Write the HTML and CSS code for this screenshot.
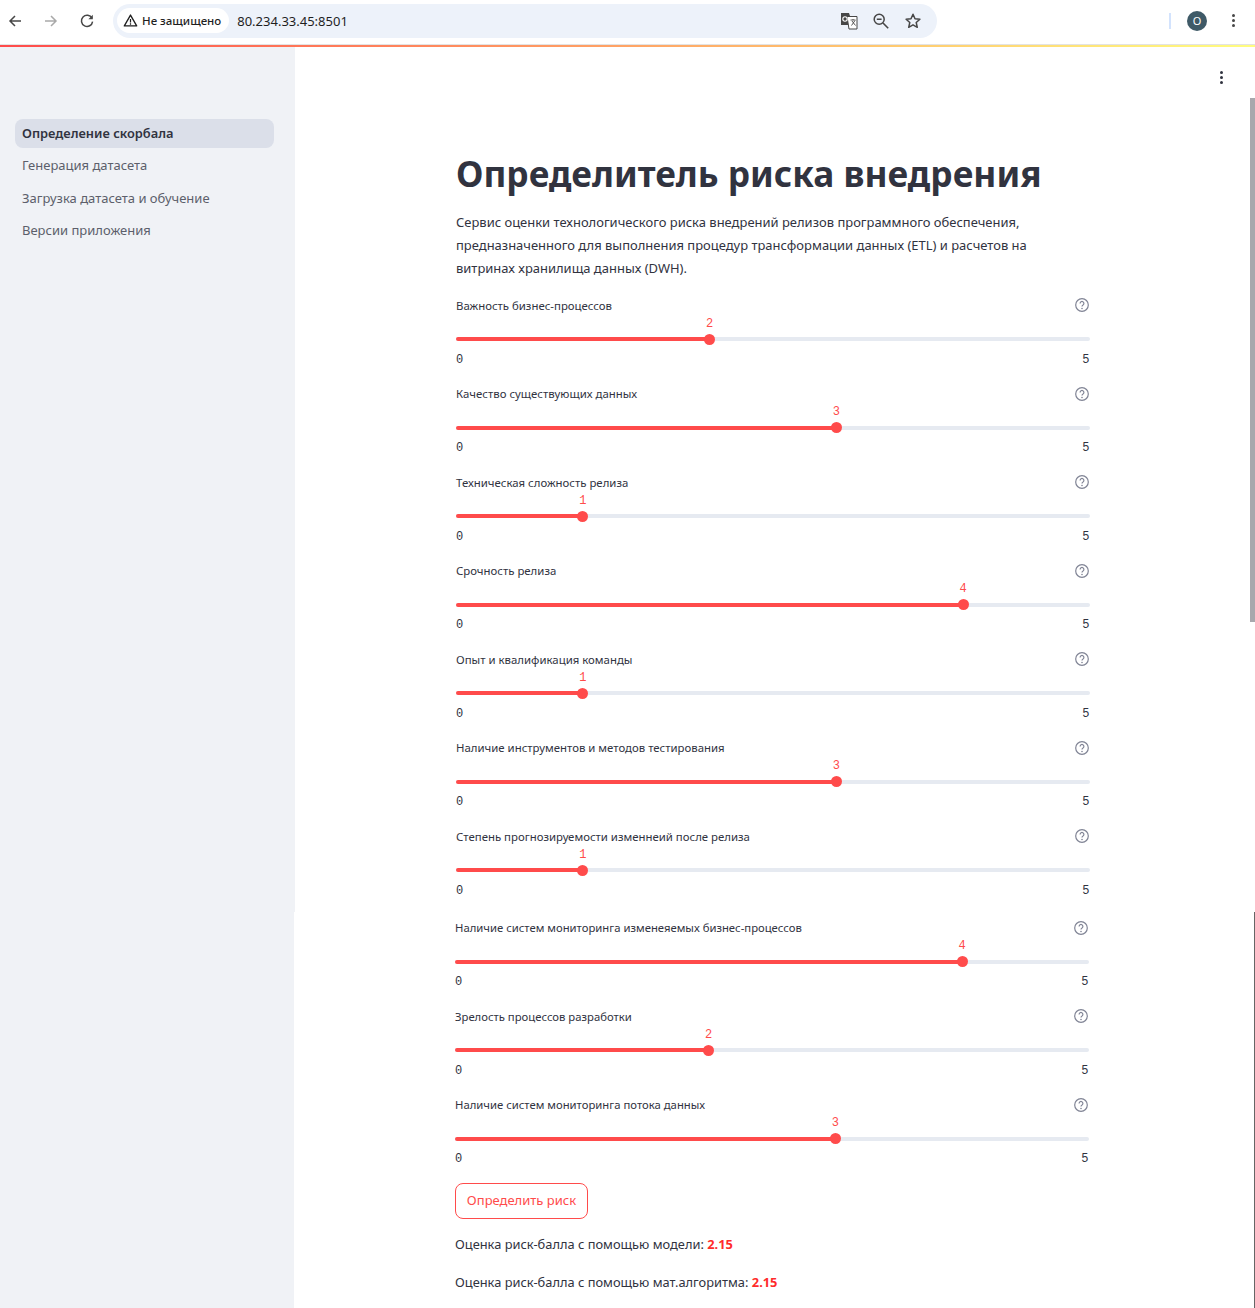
FILE: index.html
```html
<!DOCTYPE html>
<html lang="ru">
<head>
    <meta charset="UTF-8">
    <title>Определитель риска внедрения</title>
    <link rel="stylesheet" href="styles.css">
</head>
<body>

    <header class="browser-bar">
        <svg class="nav-icon" viewBox="0 0 16 16"><path d="M14 8H3M8 3L3 8l5 5" fill="none" stroke="#474747" stroke-width="1.5"/></svg>
        <svg class="nav-icon" viewBox="0 0 16 16"><path d="M2 8h11M8 3l5 5-5 5" fill="none" stroke="#a9a9a9" stroke-width="1.5"/></svg>
        <svg class="nav-icon" viewBox="0 0 16 16"><path d="M13 5.2A5.6 5.6 0 1 0 13.6 8.6" fill="none" stroke="#474747" stroke-width="1.5"/><path d="M13.8 1.8v4.4H9.4z" fill="#474747"/></svg>

        <div class="omnibox">
            <div class="security-chip">
                <svg class="warn-icon" viewBox="0 0 16 16"><path d="M8 2.2L14.6 13.8H1.4z" fill="none" stroke="#1f1f1f" stroke-width="1.4" stroke-linejoin="round"/><path d="M8 6.4v3.8M8 11v1.4" stroke="#1f1f1f" stroke-width="1.3"/></svg>
                <span>Не защищено</span>
            </div>
            <span class="url">80.234.33.45:8501</span>
            <div class="omnibox-icons">
                <svg class="omni-icon" viewBox="0 0 18 18"><path d="M1 1h8l1 3h-1v9H1z" fill="#474747"/><path d="M7 4.5h10v12.5H9z" fill="#fff" stroke="#474747" stroke-width="1"/><circle cx="5" cy="7" r="2.2" fill="none" stroke="#fff" stroke-width="1.1"/><path d="M10.5 8h5M13 7v1M11.5 13.5l3.5-5M12 9l3.5 4.5" fill="none" stroke="#474747" stroke-width="0.9"/></svg>
                <svg class="omni-icon" viewBox="0 0 18 18"><circle cx="7.2" cy="7.2" r="5" fill="none" stroke="#474747" stroke-width="1.5"/><path d="M4.8 7.2h4.8M11 11l5.2 5.2" stroke="#474747" stroke-width="1.6"/></svg>
                <svg class="omni-icon" viewBox="0 0 18 18"><path d="M9 2.2l2 4.5 4.9.5-3.7 3.3 1.1 4.8L9 12.8l-4.3 2.5 1.1-4.8L2.1 7.2 7 6.7z" fill="none" stroke="#474747" stroke-width="1.5" stroke-linejoin="round"/></svg>
            </div>
        </div>

        <div class="bar-divider"></div>
        <div class="avatar">O</div>
        <div class="kebab kebab-chrome"><i></i><i></i><i></i></div>
    </header>
    <div class="decoration"></div>

    <div class="app">
        <div class="part part-top">
            <aside class="sidebar">
                <nav class="side-nav">
                    <a class="nav-item active">Определение скорбала</a>
                    <a class="nav-item">Генерация датасета</a>
                    <a class="nav-item">Загрузка датасета и обучение</a>
                    <a class="nav-item">Версии приложения</a>
                </nav>
            </aside>
            <main class="main">
                <div class="toolbar"><div class="kebab"><i></i><i></i><i></i></div></div>
                <div class="content">
                    <h1>Определитель риска внедрения</h1>
                    <p class="intro">Сервис оценки технологического риска внедрений релизов программного обеспечения, предназначенного для выполнения процедур трансформации данных (ETL) и расчетов на витринах хранилища данных (DWH).</p>
                    <div id="sliders-top"></div>
                </div>
            </main>
        </div>

        <div class="part part-bottom">
            <aside class="sidebar"></aside>
            <main class="main">
                <div class="content">
                    <div id="sliders-bottom"></div>
                    <button class="risk-button">Определить риск</button>
                    <p class="result">Оценка риск-балла с помощью модели: <b>2.15</b></p>
                    <p class="result">Оценка риск-балла с помощью мат.алгоритма: <b>2.15</b></p>
                </div>
            </main>
        </div>

        <div class="scroll-thumb"></div>
        <div class="scroll-line"></div>
    </div>

    <script>
        const topSliders = [
            ['Важность бизнес-процессов', 2],
            ['Качество существующих данных', 3],
            ['Техническая сложность релиза', 1],
            ['Срочность релиза', 4],
            ['Опыт и квалификация команды', 1],
            ['Наличие инструментов и методов тестирования', 3],
            ['Степень прогнозируемости изменнеий после релиза', 1]
        ];
        const bottomSliders = [
            ['Наличие систем мониторинга изменеяемых бизнес-процессов', 4],
            ['Зрелость процессов разработки', 2],
            ['Наличие систем мониторинга потока данных', 3]
        ];
        const MAX_VALUE = 5;

        function sliderHtml(item) {
            const percent = item[1] / MAX_VALUE * 100;
            return `
                <div class="slider-row">
                    <div class="slider-head">
                        <span class="slider-label">${item[0]}</span>
                        <svg class="help-icon" viewBox="0 0 16 16"><circle cx="8" cy="8" r="6.3" fill="none" stroke="#808495" stroke-width="1.2"/><path d="M6.1 6.4a1.9 1.9 0 1 1 2.9 1.6c-.7.4-1 .8-1 1.5" fill="none" stroke="#808495" stroke-width="1.2"/><circle cx="8" cy="11.5" r=".8" fill="#808495"/></svg>
                    </div>
                    <div class="track">
                        <div class="track-fill" style="width: ${percent}%">
                            <span class="thumb"></span>
                            <span class="thumb-value">${item[1]}</span>
                        </div>
                    </div>
                    <div class="ticks"><span>0</span><span>${MAX_VALUE}</span></div>
                </div>`;
        }

        document.getElementById('sliders-top').innerHTML = topSliders.map(sliderHtml).join('');
        document.getElementById('sliders-bottom').innerHTML = bottomSliders.map(sliderHtml).join('');
    </script>
</body>
</html>
```

FILE: styles.css
```css
* {
    box-sizing: border-box;
}

body {
    margin: 0;
    height: 1308px;
    overflow: hidden;
    background-color: #fff;
    color: #31333f;
    font-family: "Noto Sans", sans-serif;
}

/* browser chrome */
.browser-bar {
    display: flex;
    align-items: center;
    height: 45px;
    padding: 0 14px 3px 7px;
    border-bottom: 1px solid #e3e3e3;
}

.nav-icon {
    width: 16px;
    height: 16px;
    margin-right: 20px;
}

.omnibox {
    display: flex;
    align-items: center;
    width: 824px;
    height: 34px;
    margin-left: -2px;
    padding: 0 15px 0 4px;
    border-radius: 17px;
    background-color: #edf2fa;
}

.security-chip {
    display: flex;
    align-items: center;
    gap: 4px;
    height: 25px;
    padding: 0 8px 0 6px;
    border-radius: 13px;
    background-color: #fff;
    color: #1f1f1f;
    font-size: 11.5px;
    font-weight: 500;
}

.warn-icon {
    width: 15px;
    height: 15px;
}

.url {
    margin-left: 8px;
    color: #1f1f1f;
    font-size: 13px;
}

.omnibox-icons {
    display: flex;
    gap: 14px;
    margin-left: auto;
}

.omni-icon {
    width: 18px;
    height: 18px;
}

.bar-divider {
    width: 2px;
    height: 16px;
    margin-left: 232px;
    background-color: #d3e3fd;
}

.avatar {
    width: 20px;
    height: 20px;
    margin-left: 16px;
    border-radius: 50%;
    background-color: #3f5a67;
    color: #fff;
    font-size: 11px;
    line-height: 20px;
    text-align: center;
}

.kebab {
    display: flex;
    flex-direction: column;
    gap: 2px;
    width: 3px;
}

.kebab i {
    width: 3px;
    height: 3px;
    border-radius: 50%;
    background-color: #31333f;
}

.kebab-chrome {
    margin-left: 25px;
}

.kebab-chrome i {
    background-color: #474747;
}

.decoration {
    height: 2px;
    background: linear-gradient(90deg, #ff4b4b, #fffd80);
}

/* app */
.app {
    position: relative;
    height: 1261px;
}

.part {
    display: flex;
}

.part-top {
    height: 865px;
}

.part-bottom {
    height: 396px;
}

.sidebar {
    flex: 0 0 295px;
    background-color: #f0f2f6;
}

.part-bottom .sidebar {
    flex-basis: 294px;
}

.side-nav {
    display: flex;
    flex-direction: column;
    gap: 3.4px;
    padding: 72px 21px 0 15px;
}

.nav-item {
    height: 29px;
    padding-left: 7px;
    border-radius: 8px;
    color: #5c5f6b;
    font-size: 13px;
    line-height: 29px;
}

.nav-item.active {
    background-color: #dbdfe9;
    color: #31333f;
    font-size: 12.85px;
    font-weight: 600;
}

.main {
    flex: 1;
}

.toolbar {
    display: flex;
    justify-content: flex-end;
    height: 98px;
    padding: 24px 32px 0 0;
}

.content {
    width: 634px;
    margin-left: 161px;
}

h1 {
    margin: 0;
    font-size: 35.25px;
    font-weight: 700;
    line-height: 56px;
}

.intro {
    margin: 10px 0 13px;
    padding-right: 40px;
    font-size: 12.98px;
    line-height: 23px;
}

.slider-row {
    height: 88.5px;
}

.part-bottom .content {
    padding-top: 3.5px;
}

.slider-head {
    display: flex;
    align-items: center;
    justify-content: space-between;
    height: 25px;
}

.slider-label {
    margin-top: -1px;
    font-size: 11.4px;
}

.part-bottom .slider-label {
    font-size: 11.3px;
}

.help-icon {
    width: 16px;
    height: 16px;
    margin-top: -1px;
}

.track {
    height: 4px;
    margin-top: 19px;
    border-radius: 2px;
    background-color: #e6eaf1;
}

.track-fill {
    position: relative;
    height: 4px;
    border-radius: 2px;
    background-color: #ff4b4b;
}

.thumb {
    position: absolute;
    top: -3.5px;
    right: -5.5px;
    width: 11px;
    height: 11px;
    border-radius: 50%;
    background-color: #ff4b4b;
}

.thumb-value {
    position: absolute;
    top: -22.5px;
    right: -10px;
    width: 20px;
    color: #ff4b4b;
    font-family: "Liberation Mono", monospace;
    font-size: 12px;
    line-height: 18px;
    text-align: center;
}

.ticks {
    display: flex;
    justify-content: space-between;
    margin-top: 9.5px;
    padding-right: 0.5px;
    font-family: "Liberation Mono", monospace;
    font-size: 12px;
    line-height: 18px;
}

.risk-button {
    display: block;
    width: 133px;
    height: 36px;
    margin-top: 2px;
    padding: 0 0 2px;
    border: 1px solid #ff4b4b;
    border-radius: 8px;
    background-color: #fff;
    color: #ff4b4b;
    font-family: "Noto Sans", sans-serif;
    font-size: 13px;
}

.result {
    margin: 14px 0 0;
    font-size: 12.85px;
    line-height: 24px;
}

.risk-button + .result {
    margin-top: 13px;
}

.result b {
    color: #ff2b2b;
    font-weight: 700;
}

/* scroll artefacts of the capture */
.scroll-thumb {
    position: absolute;
    top: 51px;
    right: 0;
    width: 5px;
    height: 524px;
    background-color: #a8a8ad;
}

.scroll-line {
    position: absolute;
    top: 865px;
    right: 0;
    width: 1px;
    height: 396px;
    background-color: #666;
}
```
